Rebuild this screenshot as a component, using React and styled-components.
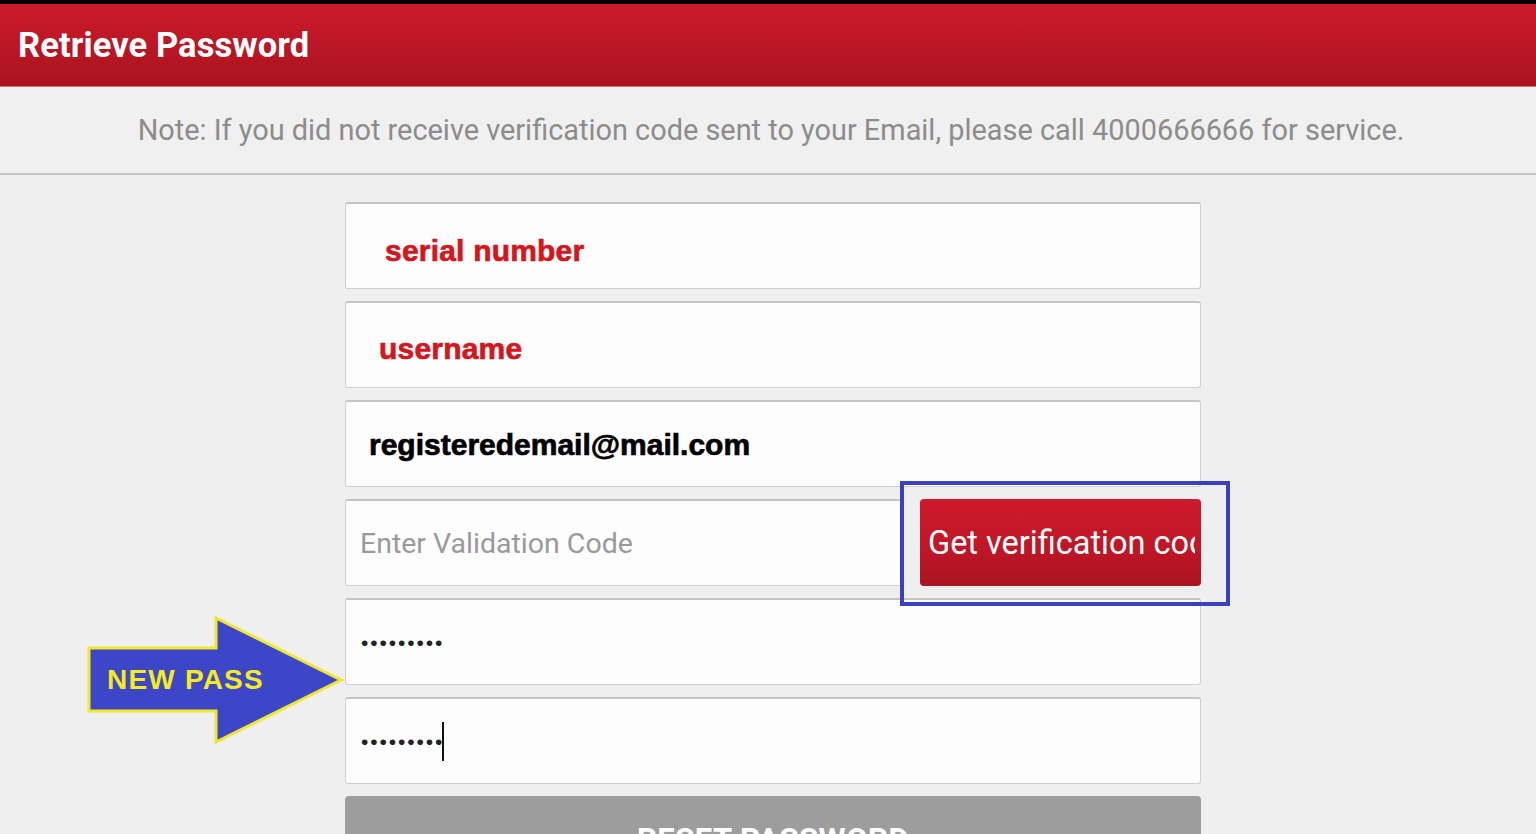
import React from "react";
import styled, { createGlobalStyle } from "styled-components";

const Global = createGlobalStyle`
  html, body { margin: 0; padding: 0; overflow: hidden; }
  body { background: #efefef; font-family: Roboto, "Liberation Sans", sans-serif; }
`;

const Page = styled.div`
  width: 1536px;
  height: 834px;
  position: relative;
  overflow: hidden;
  background: #efefef;
`;

const Header = styled.header`
  height: 82px;
  border-top: 4px solid #050000;
  background: linear-gradient(to bottom, #cc1b2a 0%, #bd1726 45%, #a9131f 100%);
  border-bottom: 1px solid #d7737b;
  display: flex;
  align-items: center;
  padding-left: 18px;
  box-sizing: content-box;
`;

const Title = styled.h1`
  margin: 0;
  color: #fff;
  font-family: Roboto, sans-serif;
  font-weight: 700;
  font-size: 34.5px;
  letter-spacing: 0.1px;
`;

const NoteBar = styled.div`
  height: 86px;
  background: #f0f0f0;
  border-bottom: 2px solid #c4c4c4;
  display: flex;
  align-items: center;
  justify-content: center;
  padding-left: 6px;
`;

const NoteText = styled.p`
  margin: 0;
  color: #8c8c8c;
  font-size: 28.9px;
  font-family: Roboto, sans-serif;
`;

const Form = styled.div`
  position: relative;
  width: 856px;
  margin: 27px 0 0 345px;
  display: flex;
  flex-direction: column;
  gap: 12px;
`;

const Field = styled.div`
  height: 87px;
  box-sizing: border-box;
  background: #fdfdfd;
  border: 1px solid #cfcfcf;
  border-top: 2px solid #c4c4c4;
  border-radius: 3px;
  display: flex;
  align-items: center;
  padding-left: ${(p) => p.$indent || 14}px;
  padding-top: ${(p) => p.$shift || 0}px;
  flex: ${(p) => (p.$grow ? "1 1 auto" : "none")};
`;

const Label = styled.span`
  font-family: "Liberation Sans", Arial, sans-serif;
  font-weight: 700;
  font-size: 30px;
  color: ${(p) => p.$color};
  letter-spacing: ${(p) => p.$ls || 0}px;
  -webkit-text-stroke: 0.7px ${(p) => p.$color};
`;

const Placeholder = styled.span`
  font-family: Roboto, sans-serif;
  font-size: 28.5px;
  color: #9a9a9a;
`;

const Dots = styled.span`
  font-family: "Liberation Sans", Arial, sans-serif;
  font-size: 21px;
  letter-spacing: 1.9px;
  color: #222;
  line-height: 1;
`;

const Caret = styled.span`
  display: inline-block;
  width: 2px;
  height: 39px;
  background: #111;
  margin-left: -2px;
`;

const Row = styled.div`
  display: flex;
  gap: 16px;
  align-items: stretch;
`;

const ButtonSlot = styled.div`
  position: relative;
  width: 281px;
  flex: none;
`;

const GetButton = styled.button`
  width: 100%;
  height: 87px;
  border: none;
  border-radius: 4px;
  background: linear-gradient(to bottom, #cd1a2b 0%, #bf1727 55%, #ab1421 100%);
  color: #fff;
  font-family: Roboto, sans-serif;
  font-size: 32.5px;
  text-align: left;
  padding: 0 0 0 8px;
  white-space: nowrap;
  overflow: hidden;
  display: block;
`;

const ButtonText = styled.span`
  display: block;
  width: 267px;
  overflow: hidden;
`;

const Highlight = styled.div`
  position: absolute;
  left: -20px;
  top: -18px;
  right: -29px;
  bottom: -20px;
  border: 4px solid #3b40c0;
  pointer-events: none;
`;

const ResetButton = styled.button`
  height: 87px;
  flex: none;
  border: none;
  border-radius: 4px 4px 0 0;
  background: #9d9d9d;
  color: #fff;
  font-family: Roboto, sans-serif;
  font-weight: 700;
  font-size: 31px;
  letter-spacing: 0.5px;
`;

const Annotation = styled.div`
  position: absolute;
  left: 87px;
  top: 616px;
  width: 258px;
  height: 128px;
`;

const AnnotationText = styled.span`
  position: absolute;
  left: 20px;
  top: 48px;
  font-family: "Liberation Sans", Arial, sans-serif;
  font-weight: 700;
  font-size: 28px;
  color: #f5ec1c;
  letter-spacing: 1.2px;
`;

export default function App() {
  return (
    <>
      <Global />
      <Page>
        <Header>
          <Title>Retrieve Password</Title>
        </Header>
        <NoteBar>
          <NoteText>
            Note: If you did not receive verification code sent to your Email, please call 4000666666 for service.
          </NoteText>
        </NoteBar>
        <Form>
          <Field $indent={39} $shift={10}>
            <Label $color="#d2171f" $ls={0.2}>serial number</Label>
          </Field>
          <Field $indent={33} $shift={8}>
            <Label $color="#d2171f" $ls={0.2}>username</Label>
          </Field>
          <Field $indent={23} $shift={2}>
            <Label $color="#000">registeredemail@mail.com</Label>
          </Field>
          <Row>
            <Field $indent={14} $grow>
              <Placeholder>Enter Validation Code</Placeholder>
            </Field>
            <ButtonSlot>
              <GetButton>
                <ButtonText>Get verification code</ButtonText>
              </GetButton>
              <Highlight />
            </ButtonSlot>
          </Row>
          <Field $indent={15}>
            <Dots>•••••••••</Dots>
          </Field>
          <Field $indent={15}>
            <Dots>•••••••••</Dots>
            <Caret />
          </Field>
          <ResetButton>RESET PASSWORD</ResetButton>
        </Form>
        <Annotation>
          <svg width="258" height="128" viewBox="0 0 258 128">
            <polygon
              points="2,32 129,32 129,2 254,64 129,126 129,95 2,95"
              fill="#3d46c6"
              stroke="#f2e82a"
              strokeWidth="3"
              strokeLinejoin="miter"
            />
          </svg>
          <AnnotationText>NEW PASS</AnnotationText>
        </Annotation>
      </Page>
    </>
  );
}
